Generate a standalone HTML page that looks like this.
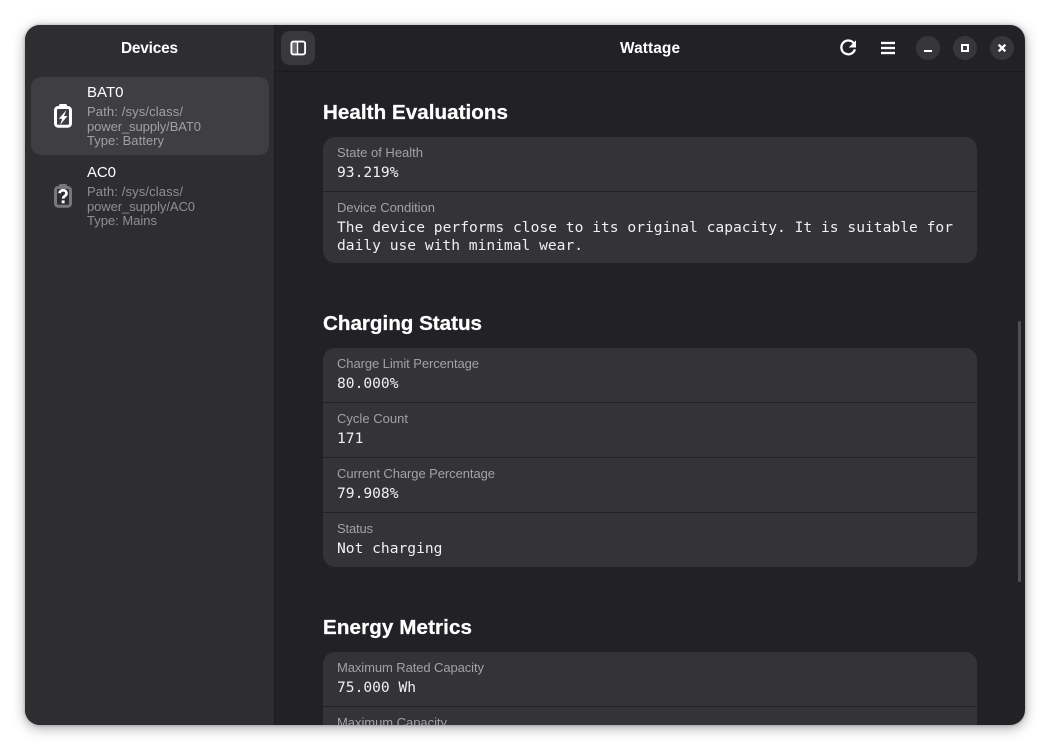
<!DOCTYPE html>
<html lang="en">
<head>
<meta charset="utf-8">
<title>Wattage</title>
<style>
html,body{margin:0;padding:0;width:1050px;height:750px;background:#fff;overflow:hidden}
.win{position:absolute;left:25px;top:25px;width:1000px;height:700px;border-radius:15px;overflow:hidden;background:#222226}
.shadow{position:absolute;left:25px;top:25px;width:1000px;height:700px;border-radius:15px;box-shadow:0 3px 13px rgba(0,0,0,.34),0 0 3px rgba(0,0,0,.25)}
.box{position:absolute}
.side{left:0;top:0;width:249px;height:700px;background:#2e2e32;border-right:1px solid #1c1c1f}
.hsep{left:250px;top:46px;width:750px;height:1px;background:#1b1b1e}
.sel{left:6px;top:52px;width:238px;height:78px;border-radius:10px;background:#3e3e43}
.btn{left:256px;top:6px;width:34px;height:34px;border-radius:9px;background:#39393d}
.wb{width:24px;height:24px;border-radius:50%;background:#37373b;top:11px}
.card{left:298px;width:654px;background:#343438;border-radius:12px}
.sep{left:298px;width:654px;height:1px;background:#212124}
.scroll{left:993px;top:296px;width:3px;height:261px;border-radius:2px;background:#505054}
svg.over{position:absolute;left:0;top:0;width:1050px;height:750px}
text{font-family:"Liberation Sans",sans-serif}
.t{font-size:15.4px;font-weight:700;fill:#fff}
.h{font-size:20.6px;font-weight:700;fill:#fff;stroke:#fff;stroke-width:.25px}
.n{font-size:15px;fill:#fff}
.s{font-size:13px;fill:#8f8f93}
.s2{font-size:13px;fill:#a0a0a4}
.l{font-size:13px;fill:#a2a2a5}
.v{font-family:"DejaVu Sans Mono",monospace;font-size:14.6px;fill:#f0f0f1}
</style>
</head>
<body>
<div class="shadow"></div>
<div class="win">
  <div class="box side"></div>
  <div class="box hsep"></div>
  <div class="box sel"></div>
  <div class="box btn"></div>
  <div class="box wb" style="left:891px"></div>
  <div class="box wb" style="left:928px"></div>
  <div class="box wb" style="left:965px"></div>
  <div class="box card" style="top:112px;height:126px"></div>
  <div class="box sep" style="top:166px"></div>
  <div class="box card" style="top:323px;height:219px"></div>
  <div class="box sep" style="top:377px"></div>
  <div class="box sep" style="top:432px"></div>
  <div class="box sep" style="top:487px"></div>
  <div class="box card" style="top:627px;height:120px"></div>
  <div class="box sep" style="top:681px"></div>
  <div class="box scroll"></div>
  <svg class="over" style="left:-25px;top:-25px" viewBox="0 0 1050 750" xmlns="http://www.w3.org/2000/svg">
    <text class="t" x="121" y="53" textLength="57">Devices</text>
    <text class="t" x="620" y="53" textLength="60">Wattage</text>

    <text class="n" x="87" y="97" textLength="36.5">BAT0</text>
    <text class="s2" x="87" y="116" textLength="96">Path: /sys/class/</text>
    <text class="s2" x="87" y="131" textLength="114">power_supply/BAT0</text>
    <text class="s2" x="87" y="145" textLength="77">Type: Battery</text>
    <text class="n" x="87" y="177" textLength="29">AC0</text>
    <text class="s" x="87" y="196" textLength="96">Path: /sys/class/</text>
    <text class="s" x="87" y="211" textLength="108">power_supply/AC0</text>
    <text class="s" x="87" y="225" textLength="70">Type: Mains</text>

    <text class="h" x="323" y="119" textLength="185">Health Evaluations</text>
    <text class="l" x="337" y="157" textLength="86">State of Health</text>
    <text class="v" x="337" y="177">93.219%</text>
    <text class="l" x="337" y="212" textLength="98">Device Condition</text>
    <text class="v" x="337" y="232" textLength="616">The device performs close to its original capacity. It is suitable for</text>
    <text class="v" x="337" y="250">daily use with minimal wear.</text>

    <text class="h" x="323" y="330" textLength="159">Charging Status</text>
    <text class="l" x="337" y="368" textLength="142">Charge Limit Percentage</text>
    <text class="v" x="337" y="388">80.000%</text>
    <text class="l" x="337" y="423" textLength="71">Cycle Count</text>
    <text class="v" x="337" y="443">171</text>
    <text class="l" x="337" y="478" textLength="158">Current Charge Percentage</text>
    <text class="v" x="337" y="498">79.908%</text>
    <text class="l" x="337" y="533" textLength="36">Status</text>
    <text class="v" x="337" y="553">Not charging</text>

    <text class="h" x="323" y="634" textLength="149">Energy Metrics</text>
    <text class="l" x="337" y="672" textLength="147">Maximum Rated Capacity</text>
    <text class="v" x="337" y="692">75.000 Wh</text>
    <text class="l" x="337" y="727" textLength="110">Maximum Capacity</text>

    <!-- battery icon -->
    <path d="M59 106v-.500q0-1.500 1.500-1.500h5q1.500 0 1.500 1.500v.500z" fill="#fff"/>
    <rect x="55.500" y="107.500" width="15" height="18.700" rx="2.600" fill="none" stroke="#fff" stroke-width="3"/>
    <path d="M66.500 110 58.800 118.700h3.400L60 125 67.500 116h-3.500z" fill="#fff"/>
    <!-- unknown battery icon -->
    <path d="M59 186v-.500q0-1.500 1.500-1.500h5q1.500 0 1.500 1.500v.500z" fill="#78787c"/>
    <rect x="55.500" y="187.500" width="15" height="18.700" rx="2.600" fill="none" stroke="#78787c" stroke-width="3"/>
    <path d="M59.600 193.200c.2-1.900 1.600-2.900 3.500-2.900 2 0 3.400 1.200 3.400 3 0 1.300-.7 2.100-1.800 2.800-1 .6-1.500 1.200-1.500 2.500" fill="none" stroke="#fff" stroke-width="2.700"/>
    <rect x="61.700" y="200.400" width="2.900" height="2.900" fill="#fff"/>

    <!-- sidebar toggle -->
    <rect x="291.400" y="41.600" width="13.700" height="12.800" rx="2" fill="none" stroke="#fff" stroke-width="1.900"/>
    <rect x="296.800" y="42" width="1.400" height="12" fill="#fff"/>
    <rect x="292" y="42.500" width="4.800" height="11" fill="#fff" fill-opacity=".25"/>

    <!-- refresh -->
    <path d="M853.900 43.400A6.900 6.900 0 1 0 854.900 49.300" fill="none" stroke="#fff" stroke-width="2.300"/>
    <path d="M856 40.200v7.300H848.700z" fill="#fff"/>
    <!-- menu -->
    <rect x="881" y="41.800" width="14" height="2.400" fill="#fff"/>
    <rect x="881" y="46.800" width="14" height="2.400" fill="#fff"/>
    <rect x="881" y="51.800" width="14" height="2.400" fill="#fff"/>
    <!-- window controls -->
    <rect x="924" y="50" width="8" height="2" fill="#fff"/>
    <rect x="962" y="45" width="6" height="6" fill="none" stroke="#fff" stroke-width="2"/>
    <path d="M998.700 44.700l6.600 6.600M1005.300 44.700l-6.600 6.600" fill="none" stroke="#fff" stroke-width="2.400"/>
  </svg>
</div>
</body>
</html>
